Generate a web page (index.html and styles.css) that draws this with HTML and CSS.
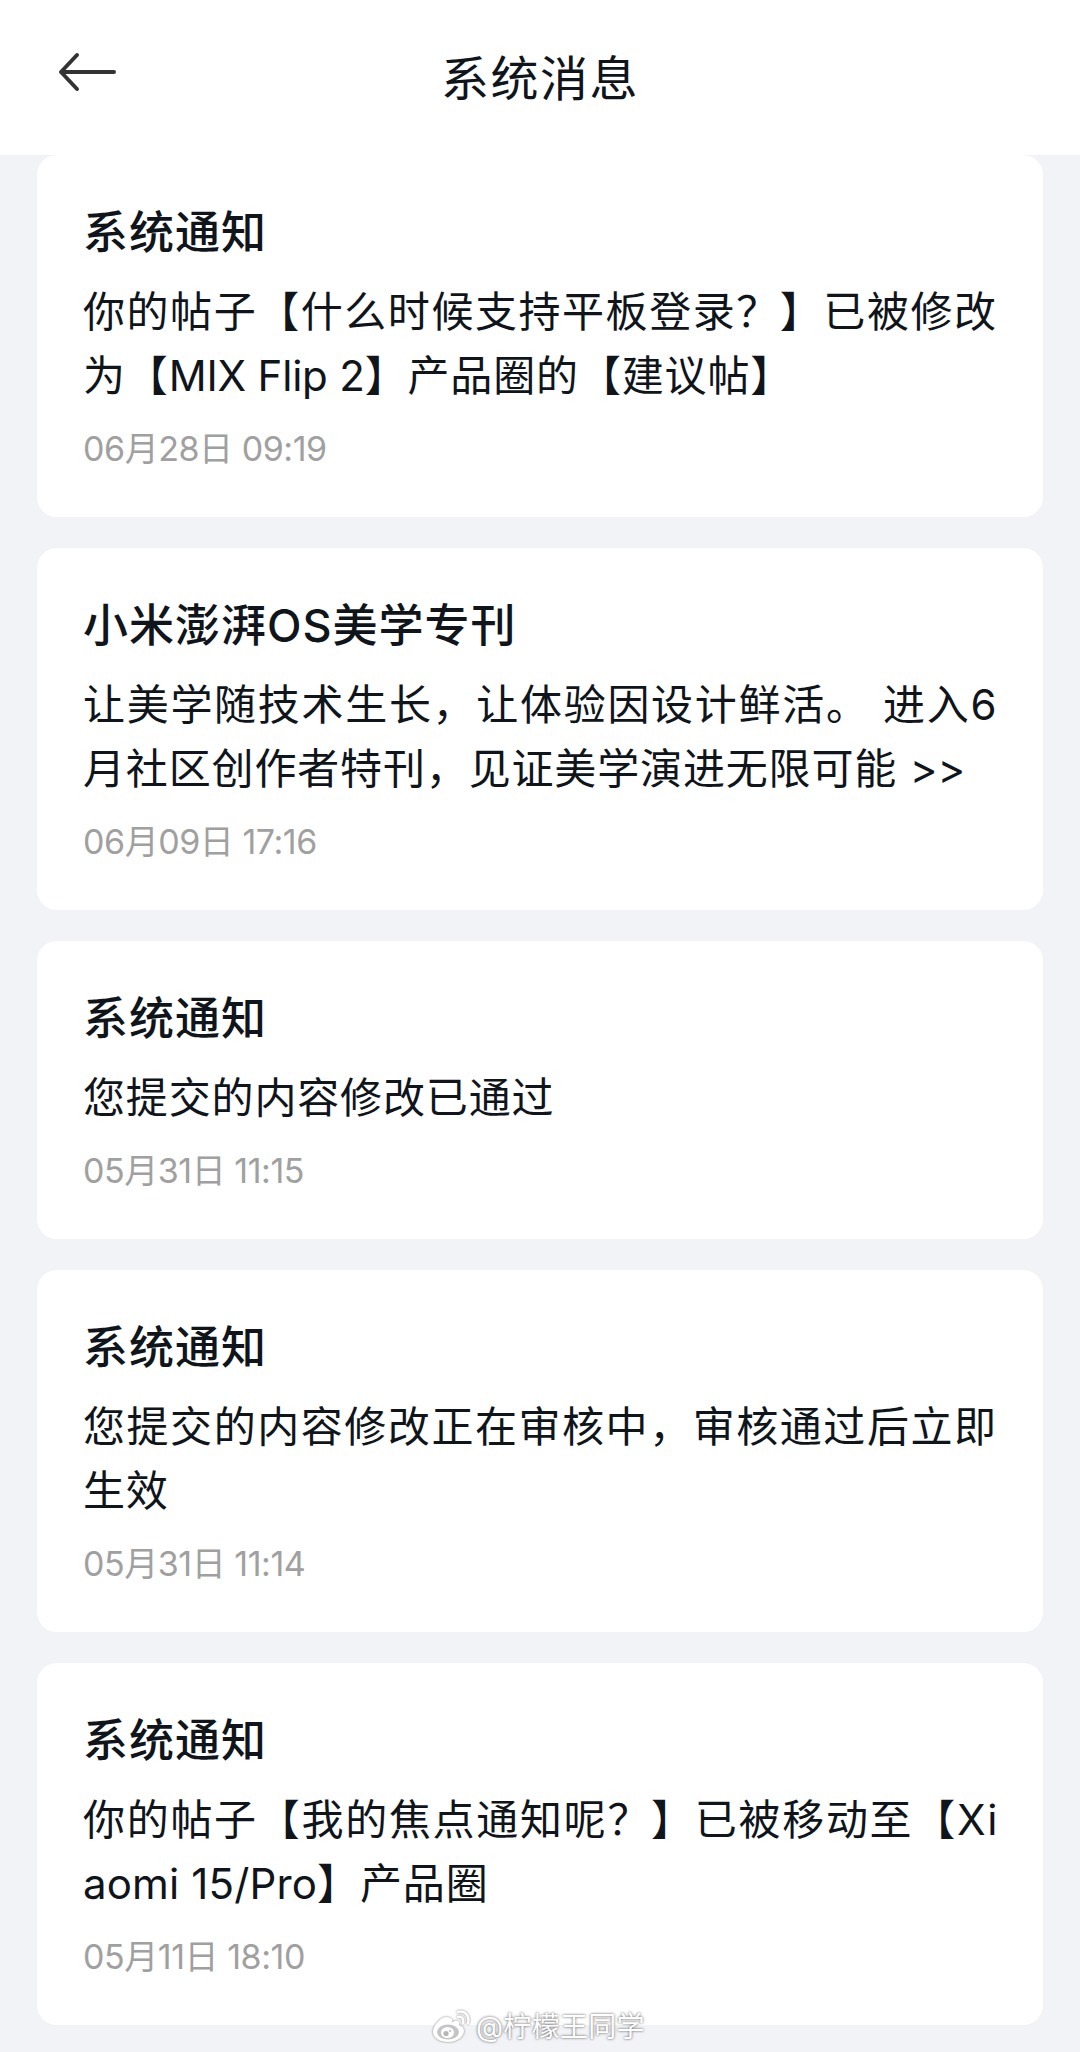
FILE: index.html
```html
<!DOCTYPE html>
<html lang="zh-CN">
<head>
  <meta charset="UTF-8">
  <meta name="viewport" content="width=device-width, initial-scale=1.0">
  <title>系统消息</title>
  <link rel="stylesheet" href="styles.css">
</head>
<body>

  <header class="topbar">
    <svg class="back" viewBox="0 0 60 40" fill="none" stroke="#333" stroke-width="4" stroke-linecap="round" stroke-linejoin="round">
      <path d="M57 20H4M20 3L4 20L20 37"/>
    </svg>
    <h1>系统消息</h1>
  </header>

  <main class="list">
    <article class="card">
      <h2>系统通知</h2>
      <p><span class="line full">你的帖子【什么时候支持平板登录？】已被修改</span><span class="line">为【<span class="latin">MIX Flip 2</span>】产品圈的【建议帖】</span></p>
      <time>06月28日 09:19</time>
    </article>

    <article class="card">
      <h2>小米澎湃OS美学专刊</h2>
      <p><span class="line full wide">让美学随技术生长，让体验因设计鲜活。 进入6</span><span class="line">月社区创作者特刊，见证美学演进无限可能 <span class="latin">&gt;&gt;</span></span></p>
      <time>06月09日 17:16</time>
    </article>

    <article class="card">
      <h2>系统通知</h2>
      <p><span class="line">您提交的内容修改已通过</span></p>
      <time>05月31日 11:15</time>
    </article>

    <article class="card">
      <h2>系统通知</h2>
      <p><span class="line full">您提交的内容修改正在审核中，审核通过后立即</span><span class="line">生效</span></p>
      <time>05月31日 11:14</time>
    </article>

    <article class="card">
      <h2>系统通知</h2>
      <p><span class="line full wide">你的帖子【我的焦点通知呢？】已被移动至【Xi</span><span class="line"><span class="model">aomi 15/Pro</span>】产品圈</span></p>
      <time>05月11日 18:10</time>
    </article>
  </main>

  <div class="watermark">
    <svg class="weibo" viewBox="0 0 38 34">
      <path fill="#fff" d="M14 8C9 8 1 16 1 23c0 6 7 10 15 10 9 0 16-5 16-11 0-3-2-5-5-6 1-3 0-6-7-3 1-3-1-5-6-5z"/>
      <ellipse cx="16" cy="23" rx="11" ry="7.500" fill="#c4c4c6"/>
      <ellipse cx="15.500" cy="23.500" rx="6.500" ry="5.500" fill="#fff"/>
      <circle cx="14" cy="24.500" r="2.600" fill="#b5b5b8"/>
      <circle cx="18" cy="22" r="1" fill="#b5b5b8"/>
      <path fill="none" stroke="#fff" stroke-width="2.500" stroke-linecap="round" d="M26 8c4-1 6 2 5 6M26 3c7-2 12 4 10 11"/>
    </svg>
    <span>@柠檬王同学</span>
  </div>

</body>
</html>
```

FILE: styles.css
```css
* {
  box-sizing: border-box;
}

body {
  margin: 0;
  min-height: 2052px;
  background: #f2f3f7;
  color: #0f151b;
  font-family: Inter, "Noto Sans CJK SC", sans-serif;
  text-spacing-trim: space-all;
  position: relative;
}

h1, h2, p {
  margin: 0;
}

.topbar {
  height: 155px;
  background: #fff;
  display: flex;
  align-items: flex-start;
  padding: 49px 57px 0;
}

.back {
  width: 60px;
  height: 40px;
  margin-top: 3px;
}

.topbar h1 {
  flex: 1;
  margin-right: 60px;
  text-align: center;
  font-size: 48px;
  line-height: 60px;
  font-weight: 400;
  letter-spacing: 1.5px;
}

.list {
  display: flex;
  flex-direction: column;
  gap: 31px;
  padding: 0 37px;
}

.card {
  background: #fff;
  border-radius: 20px;
  padding: 48px 36px 46px 46px;
}

.card h2 {
  font-size: 45px;
  line-height: 60px;
  font-weight: 500;
  letter-spacing: 1px;
}

.card p {
  margin: 17px 0 18px;
  font-size: 42px;
  line-height: 64px;
}

.line {
  display: block;
  white-space: nowrap;
  letter-spacing: 0.85px;
}

.full {
  letter-spacing: 1.55px;
}

.wide {
  letter-spacing: 1.7px;
}

.latin {
  letter-spacing: -0.2px;
}

.model {
  letter-spacing: 0.15px;
}

.card time {
  display: block;
  color: #a0a0a0;
  font-size: 34px;
  line-height: 45px;
  letter-spacing: -0.45px;
}

.watermark {
  position: absolute;
  left: 432px;
  top: 2007px;
  display: flex;
  align-items: center;
  gap: 6px;
  color: #fff;
  font-size: 28px;
  line-height: 40px;
  letter-spacing: 0.3px;
  text-shadow: 0 0 3px rgba(0, 0, 0, 0.5), 0 0 2px rgba(0, 0, 0, 0.25);
}

.weibo {
  width: 38px;
  height: 34px;
  margin-top: -3px;
  filter: drop-shadow(0 0 1px rgba(0, 0, 0, 0.5));
}
```
